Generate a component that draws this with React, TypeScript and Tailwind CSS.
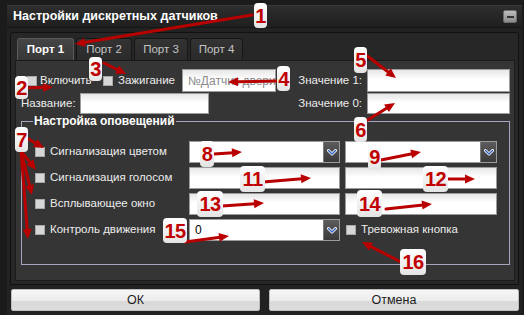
import React from 'react';

type Arrow = [number, number, number, number];

const arrows: Arrow[] = [
  [252, 15, 75, 44],
  [27, 88, 53, 87],
  [104, 63, 126, 74],
  [277, 81, 228, 82],
  [366, 55, 396, 78],
  [366, 121, 395, 103],
  [25, 137, 44, 148],
  [21, 151, 36, 170],
  [21, 151, 32, 195],
  [21, 151, 28, 239],
  [214, 154, 242, 152],
  [381, 160, 421, 152],
  [263, 182, 311, 178],
  [447, 179, 475, 179],
  [222, 206, 264, 203],
  [386, 209, 432, 204],
  [185, 242, 229, 236],
  [401, 262, 362, 242],
];

const badges = [
  { n: '1', cls: 'left-[254px] top-[3px] w-[13px] h-[25px]' },
  { n: '2', cls: 'left-[15px] top-[76px] w-[13px] h-[23px]' },
  { n: '3', cls: 'left-[89px] top-[57px] w-[13px] h-[24px]' },
  { n: '4', cls: 'left-[277px] top-[66px] w-[13px] h-[25px]' },
  { n: '5', cls: 'left-[354px] top-[47px] w-[13px] h-[26px]' },
  { n: '6', cls: 'left-[354px] top-[117px] w-[13px] h-[25px]' },
  { n: '7', cls: 'left-[15px] top-[127px] w-[13px] h-[25px]' },
  { n: '8', cls: 'left-[200px] top-[141px] w-[14px] h-[26px]' },
  { n: '9', cls: 'left-[368px] top-[143px] w-[13px] h-[27px]' },
  { n: '11', cls: 'left-[240px] top-[166px] w-[25px] h-[26px]' },
  { n: '12', cls: 'left-[423px] top-[166px] w-[25px] h-[26px]' },
  { n: '13', cls: 'left-[197px] top-[191px] w-[26px] h-[26px]' },
  { n: '14', cls: 'left-[357px] top-[190px] w-[25px] h-[27px]' },
  { n: '15', cls: 'left-[163px] top-[218px] w-[24px] h-[25px]' },
  { n: '16', cls: 'left-[400px] top-[249px] w-[26px] h-[26px]' },
];

function ArrowShape({ a }: { a: Arrow }) {
  const [x1, y1, x2, y2] = a;
  const len = Math.hypot(x2 - x1, y2 - y1);
  const ux = (x2 - x1) / len;
  const uy = (y2 - y1) / len;
  const hl = 10;
  const hw = 4.5;
  const bx = x2 - ux * hl;
  const by = y2 - uy * hl;
  const pts = `${x2},${y2} ${bx - uy * hw},${by + ux * hw} ${bx + uy * hw},${by - ux * hw}`;
  return (
    <g>
      <line x1={x1} y1={y1} x2={bx + ux * 1} y2={by + uy * 1} stroke="#b80000" strokeWidth={3} strokeLinecap="round" />
      <polygon points={pts} fill="#b80000" />
    </g>
  );
}

function Check() {
  return <div className="w-[10px] h-[10px] shrink-0 bg-[#d6d6d6] border border-[#a8a8a8]" />;
}

function Field({ w, children }: { w: string; children?: React.ReactNode }) {
  return (
    <div className={`${w} h-full shrink-0 border border-[#9c9c9c] bg-[linear-gradient(to_bottom,#e6e6e6,#ffffff_45%)] flex items-center overflow-hidden`}>
      {children}
    </div>
  );
}

function Combo({ w, value }: { w: string; value?: string }) {
  return (
    <div className={`${w} h-full shrink-0 border border-[#9c9c9c] bg-white flex`}>
      <div className="flex-1 flex items-center pl-[5px] text-[12px] text-black">{value}</div>
      <div className="w-[16px] h-full bg-[linear-gradient(to_bottom,#5c5c5c,#3a3a3a)] border-l border-[#7a7a7a] flex items-center justify-center">
        <svg width="10" height="7" viewBox="0 0 10 7">
          <polyline points="1.5,1.5 5,5 8.5,1.5" fill="none" stroke="#ffffff" strokeWidth="3" strokeLinejoin="round" strokeLinecap="round" />
          <polyline points="1.5,1.5 5,5 8.5,1.5" fill="none" stroke="#2f5fc4" strokeWidth="1.3" strokeLinejoin="round" strokeLinecap="round" />
        </svg>
      </div>
    </div>
  );
}

function Tab({ label, active, w }: { label: string; active?: boolean; w: string }) {
  return (
    <div
      className={`${w} h-[22px] rounded-t-[3px] border border-b-0 flex items-center justify-center ${
        active
          ? 'bg-[linear-gradient(to_bottom,#454545,#383838)] border-[#5a5a5a] text-white font-bold text-[11.5px]'
          : 'bg-[linear-gradient(to_bottom,#333333,#2a2a2a)] border-[#161616] text-[#c4c4c4] text-[11.5px]'
      }`}
    >
      {label}
    </div>
  );
}

function AlertRow({ label, children }: { label: string; children: React.ReactNode }) {
  return (
    <div className="h-[22px] flex items-center">
      <div className="ml-[13px]"><Check /></div>
      <div className="ml-[5px] w-[139px] text-[#ececec]">{label}</div>
      {children}
    </div>
  );
}

export default function App() {
  return (
    <div className="relative w-[524px] h-[315px] overflow-hidden bg-[#1b1b1b] font-['Liberation_Sans',Arial,sans-serif] text-[11.5px]">
      <div className="ml-[7px] mt-[5px] w-[515px] h-[310px] bg-[#222222] border-t border-[#383838] flex flex-col">
        {/* title bar */}
        <div className="h-[22px] shrink-0 bg-[linear-gradient(to_bottom,#2e2e2e,#1f1f1f)] border-b border-[#151515] flex items-center justify-between pl-[6px] pr-[5px]">
          <span className="text-white font-bold text-[12.5px]">Настройки дискретных датчиков</span>
          <div className="w-[14px] h-[13px] rounded-[2px] bg-[linear-gradient(to_bottom,#bdbdbd,#8a8a8a)] border border-[#6c6c6c] flex items-center justify-center">
            <div className="w-[7px] h-[2px] bg-[#333333]" />
          </div>
        </div>

        {/* tab widget */}
        <div className="mt-[4px] mx-[3px] h-[253px] shrink-0 border border-[#111111] rounded-t-[3px] bg-[#272727] flex flex-col">
          <div className="h-[27px] shrink-0 pl-[6px] flex items-end gap-[2px]">
            <Tab label="Порт 1" active w="w-[57px]" />
            <Tab label="Порт 2" w="w-[56px]" />
            <Tab label="Порт 3" w="w-[54px]" />
            <Tab label="Порт 4" w="w-[53px]" />
          </div>
          <div className="ml-[4px] mr-[3px] h-[221px] shrink-0 bg-[#353535] border border-[#1a1a1a] text-[#ececec]">
            {/* row 1 */}
            <div className="mt-[8px] h-[23px] flex items-center">
              <div className="ml-[11px]"><Check /></div>
              <div className="ml-[3px] w-[63px]">Включить</div>
              <Check />
              <div className="ml-[5px] w-[64px]">Зажигание</div>
              <Field w="w-[94px]">
                <span className="pl-[5px] whitespace-nowrap text-[#8a8a8a] text-[12px]">№Датчик двери</span>
              </Field>
              <div className="w-[91px] text-right pr-[5px]">Значение 1:</div>
              <Field w="w-[143px]" />
            </div>
            {/* row 2 */}
            <div className="mt-[1px] h-[21px] flex items-center">
              <div className="ml-[5px] w-[59px]">Название:</div>
              <Field w="w-[129px]" />
              <div className="w-[67px]" />
              <div className="w-[91px] text-right pr-[5px]">Значение 0:</div>
              <Field w="w-[143px]" />
            </div>

            {/* group box */}
            <div className="relative mt-[7px] ml-[5px] w-[489px] h-[144px] border border-[#a6a6c0] pt-[19px] flex flex-col gap-[4px]">
              <span className="absolute -top-[8px] left-[11px] px-[1px] bg-[#353535] text-white font-bold text-[12px] leading-[14px]">
                Настройка оповещений
              </span>
              <AlertRow label="Сигнализация цветом">
                <Combo w="w-[151px]" />
                <div className="ml-[5px] h-full flex"><Combo w="w-[152px]" /></div>
              </AlertRow>
              <AlertRow label="Сигнализация голосом">
                <Field w="w-[151px]" />
                <div className="ml-[5px] h-full flex"><Field w="w-[152px]" /></div>
              </AlertRow>
              <AlertRow label="Всплывающее окно">
                <Field w="w-[151px]" />
                <div className="ml-[5px] h-full flex"><Field w="w-[152px]" /></div>
              </AlertRow>
              <AlertRow label="Контроль движения">
                <Combo w="w-[151px]" value="0" />
                <div className="ml-[6px]"><Check /></div>
                <div className="ml-[5px]">Тревожная кнопка</div>
              </AlertRow>
            </div>
          </div>
        </div>

        {/* buttons */}
        <div className="mt-[4px] pl-[4px] flex gap-[9px]">
          <button className="w-[249px] h-[22px] rounded-[2px] border border-[#bdbdbd] bg-[linear-gradient(to_bottom,#f6f6f6_0%,#ececec_55%,#d9d9d9_56%,#dcdcdc_100%)] text-[#1e1e1e] text-[12.5px]">
            ОК
          </button>
          <button className="w-[250px] h-[22px] rounded-[2px] border border-[#bdbdbd] bg-[linear-gradient(to_bottom,#f6f6f6_0%,#ececec_55%,#d9d9d9_56%,#dcdcdc_100%)] text-[#1e1e1e] text-[12.5px]">
            Отмена
          </button>
        </div>
      </div>

      {/* annotations */}
      <svg className="absolute left-0 top-0 pointer-events-none" width="524" height="315" viewBox="0 0 524 315">
        {arrows.map((a, i) => (
          <ArrowShape key={i} a={a} />
        ))}
      </svg>
      {badges.map((b) => (
        <div
          key={b.n}
          className={`absolute ${b.cls} rounded-[4px] bg-[linear-gradient(to_bottom,#ffffff,#e4e4e4)] flex items-center justify-center text-[#c00000] font-bold text-[20px] leading-none tracking-[-0.5px]`}
        >
          {b.n}
        </div>
      ))}
    </div>
  );
}
